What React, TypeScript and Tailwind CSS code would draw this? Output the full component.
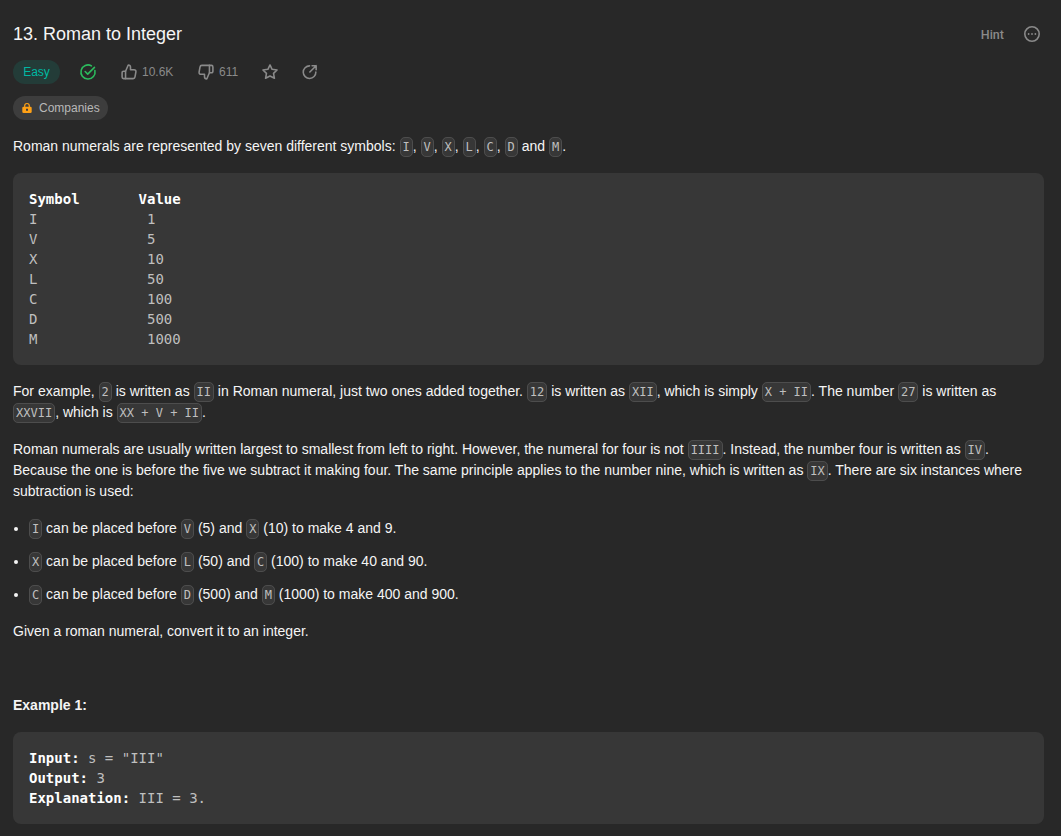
import React from "react";

const MONO = "font-['DejaVu_Sans_Mono',monospace]";

function Code({ children }: { children: React.ReactNode }) {
  return (
    <code className="whitespace-pre-wrap rounded-[5px] border border-[#4d4d4d] bg-[#373737] p-0.5 font-['DejaVu_Sans_Mono',monospace] text-[12px] leading-none text-[#bfbfbf]">
      {children}
    </code>
  );
}

function Icon({ children, className }: { children: React.ReactNode; className?: string }) {
  return (
    <svg
      viewBox="0 0 24 24"
      className={"h-[18px] w-[18px] shrink-0 " + (className ?? "")}
      fill="none"
      stroke="currentColor"
      strokeWidth="2.1"
      strokeLinecap="round"
      strokeLinejoin="round"
    >
      {children}
    </svg>
  );
}

function Thumb() {
  return (
    <>
      <path d="M7.4 11 L11 2.6 C12.8 2.6 14 3.8 14 5.6 V8.9 H18.6 C20.4 8.9 21.5 10.3 21.2 11.9 L20 18.6 C19.8 20 18.8 20.8 17.5 20.8 H7.4 Z" />
      <path d="M7.4 11 H4.8 C3.6 11 2.8 11.8 2.8 13 V18.8 C2.8 20 3.6 20.8 4.8 20.8 H7.4" />
    </>
  );
}

const symbols = [
  ["I", "1"],
  ["V", "5"],
  ["X", "10"],
  ["L", "50"],
  ["C", "100"],
  ["D", "500"],
  ["M", "1000"],
];

export default function App() {
  return (
    <main className="h-[836px] w-full overflow-hidden bg-[#282828] pl-[13px] pr-[17px] pt-5 font-['Liberation_Sans',Arial,sans-serif] text-sm leading-[21px] text-[#f5f5f5]">
      <header className="flex h-7 items-center justify-between">
        <h1 className="text-[18px] leading-7">13. Roman to Integer</h1>
        <div className="flex items-center gap-[19px] pr-[3px] text-[#8a8a8a]">
          <span className="font-[Roboto,sans-serif] text-[12.5px] font-medium">Hint</span>
          <Icon>
            <circle cx="12" cy="12" r="9.6" />
            <path d="M7.5 12h.01M12 12h.01M16.5 12h.01" strokeWidth="2.4" />
          </Icon>
        </div>
      </header>

      <div className="mt-3 flex h-6 items-center text-xs text-[#8a8a8a]">
        <span className="flex h-6 w-[47px] items-center justify-center rounded-full bg-[#233c38] text-[#00b8a3]">Easy</span>
        <Icon className="ml-[19px] text-[#2cbb5d]">
          <path d="M21.2 10 A9.4 9.4 0 1 1 16.6 3.8" />
          <path d="M8.2 11.4 L11.6 14.8 L20.6 5.8" />
        </Icon>
        <Icon className="ml-[23px]"><Thumb /></Icon>
        <span className="ml-1 w-[32px]">10.6K</span>
        <Icon className="ml-[23px] rotate-180"><Thumb /></Icon>
        <span className="ml-1 w-5">611</span>
        <Icon className="ml-[22px]">
          <path d="M12 2.6 L14.8 8.4 L21.4 9.3 L16.7 13.9 L17.9 20.4 L12 17.3 L6.1 20.4 L7.3 13.9 L2.6 9.3 L9.2 8.4 Z" />
        </Icon>
        <Icon className="ml-[22px]">
          <path d="M19.8 12 A8.4 8.4 0 1 1 11.4 3.8" />
          <path d="M14.8 3.6 H20.2 V9 M20.2 3.6 L11.8 12" />
        </Icon>
      </div>

      <div className="mt-3 flex h-6 w-[95px] items-center gap-[6px] rounded-full bg-[#3d3d3d] pl-2 text-xs text-[#b8b8b8]">
        <svg viewBox="0 0 24 24" className="h-3 w-3 shrink-0 text-[#ffa116]" fill="currentColor">
          <path
            fillRule="evenodd"
            d="M6.2 9.5 V7.6 a5.8 5.8 0 0 1 11.6 0 V9.5 h1 a2.6 2.6 0 0 1 2.6 2.6 v7.3 a2.6 2.6 0 0 1 -2.6 2.6 H5.2 a2.6 2.6 0 0 1 -2.6 -2.6 v-7.3 a2.6 2.6 0 0 1 2.6 -2.6 Z M8.6 9.5 h6.8 V7.6 a3.4 3.4 0 0 0 -6.8 0 Z M10 13.5 v4 h4 v-4 Z"
          />
        </svg>
        Companies
      </div>

      <div className="mt-4 flex flex-col gap-4">
        <p>
          Roman numerals are represented by seven different symbols: <Code>I</Code>, <Code>V</Code>, <Code>X</Code>,{" "}
          <Code>L</Code>, <Code>C</Code>, <Code>D</Code> and <Code>M</Code>.
        </p>
        <pre className={"rounded-lg bg-[#373737] p-4 text-sm leading-5 text-[#bfbfbf] " + MONO}>
          <strong className="font-bold text-white">{"Symbol       Value"}</strong>
          {"\n" + symbols.map(([s, v]) => s + " ".repeat(13) + v).join("\n")}
        </pre>
        <p>
          For example, <Code>2</Code> is written as <Code>II</Code> in Roman numeral, just two ones added together.{" "}
          <Code>12</Code> is written as <Code>XII</Code>, which is simply <Code>X + II</Code>. The number{" "}
          <Code>27</Code> is written as <Code>XXVII</Code>, which is <Code>XX + V + II</Code>.
        </p>
        <p>
          Roman numerals are usually written largest to smallest from left to right. However, the numeral for four is
          not <Code>IIII</Code>. Instead, the number four is written as <Code>IV</Code>. Because the one is before the
          five we subtract it making four. The same principle applies to the number nine, which is written as{" "}
          <Code>IX</Code>. There are six instances where subtraction is used:
        </p>
        <ul className="flex list-disc flex-col gap-3 pl-4">
          <li>
            <Code>I</Code> can be placed before <Code>V</Code> (5) and <Code>X</Code> (10) to make 4 and 9.
          </li>
          <li>
            <Code>X</Code> can be placed before <Code>L</Code> (50) and <Code>C</Code> (100) to make 40 and 90.
          </li>
          <li>
            <Code>C</Code> can be placed before <Code>D</Code> (500) and <Code>M</Code> (1000) to make 400 and 900.
          </li>
        </ul>
        <p>Given a roman numeral, convert it to an integer.</p>
        <p>&nbsp;</p>
        <p>
          <strong>Example 1:</strong>
        </p>
        <pre className={"rounded-lg bg-[#373737] p-4 text-sm leading-5 text-[#bfbfbf] " + MONO}>
          <strong className="text-white">Input:</strong>
          {' s = "III"\n'}
          <strong className="text-white">Output:</strong>
          {" 3\n"}
          <strong className="text-white">Explanation:</strong>
          {" III = 3."}
        </pre>
      </div>
    </main>
  );
}
